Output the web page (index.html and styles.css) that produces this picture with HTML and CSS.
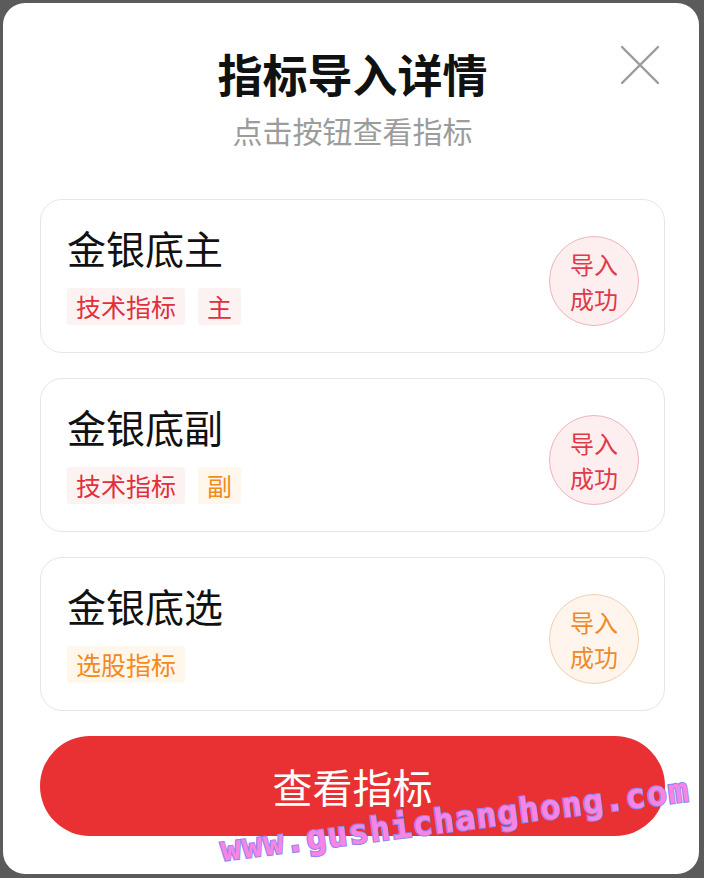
FILE: index.html
```html
<!DOCTYPE html>
<html>
<head>
    <meta charset="utf-8">
    <title>指标导入详情</title>
    <link rel="stylesheet" href="styles.css">
</head>
<body>
    <div class="modal">
        <button class="close" aria-label="关闭">
            <svg width="40" height="40" viewBox="0 0 40 40"><path d="M2 2 L38 38 M38 2 L2 38" stroke="#9a9a9a" stroke-width="2.4" stroke-linecap="round" fill="none"/></svg>
        </button>

        <h1 class="title">指标导入详情</h1>
        <p class="subtitle">点击按钮查看指标</p>

        <div class="list">
            <div class="card">
                <div class="info">
                    <div class="name">金银底主</div>
                    <div class="tags">
                        <span class="tag red">技术指标</span>
                        <span class="tag red">主</span>
                    </div>
                </div>
                <div class="badge red">导入<br>成功</div>
            </div>

            <div class="card">
                <div class="info">
                    <div class="name">金银底副</div>
                    <div class="tags">
                        <span class="tag red">技术指标</span>
                        <span class="tag orange">副</span>
                    </div>
                </div>
                <div class="badge red">导入<br>成功</div>
            </div>

            <div class="card">
                <div class="info">
                    <div class="name">金银底选</div>
                    <div class="tags">
                        <span class="tag orange">选股指标</span>
                    </div>
                </div>
                <div class="badge orange">导入<br>成功</div>
            </div>
        </div>

        <button class="view-btn">查看指标</button>

        <div class="watermark">www.gushichanghong.com</div>
    </div>
</body>
</html>
```

FILE: styles.css
```css
body {
    margin: 0;
    background: #5b5b5b;
    font-family: "Noto Sans CJK SC", "Noto Sans", sans-serif;
}

.modal {
    position: relative;
    margin: 3px 5px 0 3px;
    height: 871px;
    box-sizing: border-box;
    background: #fff;
    border-radius: 22px;
    padding: 42px 34px 0 37px;
    overflow: hidden;
}

.close {
    position: absolute;
    top: 42px;
    right: 39px;
    width: 40px;
    height: 40px;
    padding: 0;
    border: none;
    background: none;
}

.title {
    margin: 0;
    text-align: center;
    font-size: 45px;
    line-height: 58px;
    font-weight: 700;
    color: #111;
}

.subtitle {
    margin: 7px 0 0;
    text-align: center;
    font-size: 30px;
    line-height: 40px;
    color: #9c9c9c;
}

.list {
    margin-top: 49px;
    display: flex;
    flex-direction: column;
    gap: 25px;
}

.card {
    height: 154px;
    box-sizing: border-box;
    border: 1px solid #e6e6e6;
    border-radius: 22px;
    padding: 25px 25px 0 26px;
    display: flex;
    justify-content: space-between;
    align-items: flex-start;
}

.name {
    font-size: 39px;
    line-height: 44px;
    color: #111;
}

.tags {
    margin-top: 19px;
    display: flex;
    gap: 13px;
}

.tag {
    font-size: 25px;
    line-height: 37px;
    padding: 0 9px;
    border-radius: 3px;
}

.tag.red {
    color: #e0303c;
    background: #fdf2f2;
}

.tag.orange {
    color: #f28a1c;
    background: #fff6ec;
}

.badge {
    width: 90px;
    height: 90px;
    box-sizing: border-box;
    margin-top: 11px;
    border-radius: 50%;
    border: 1px solid;
    font-size: 24px;
    line-height: 35px;
    text-align: center;
    display: flex;
    align-items: center;
    justify-content: center;
}

.badge.red {
    color: #e03a48;
    background: #fdeeef;
    border-color: #eeb4ba;
}

.badge.orange {
    color: #ef8a2a;
    background: #fff5ec;
    border-color: #f0cfb0;
}

.view-btn {
    display: block;
    width: 100%;
    height: 100px;
    margin-top: 25px;
    border: none;
    border-radius: 50px;
    background: #e93134;
    color: #fff;
    font-family: inherit;
    font-size: 40px;
}

.watermark {
    position: absolute;
    left: 220px;
    top: 826px;
    transform: rotate(-7.3deg);
    transform-origin: left bottom;
    font-family: "DejaVu Sans Mono", monospace;
    font-size: 34px;
    font-weight: 700;
    letter-spacing: 1px;
    color: #f884e4;
    -webkit-text-stroke: 2px #8c86f2;
    paint-order: stroke fill;
    white-space: nowrap;
}
```
